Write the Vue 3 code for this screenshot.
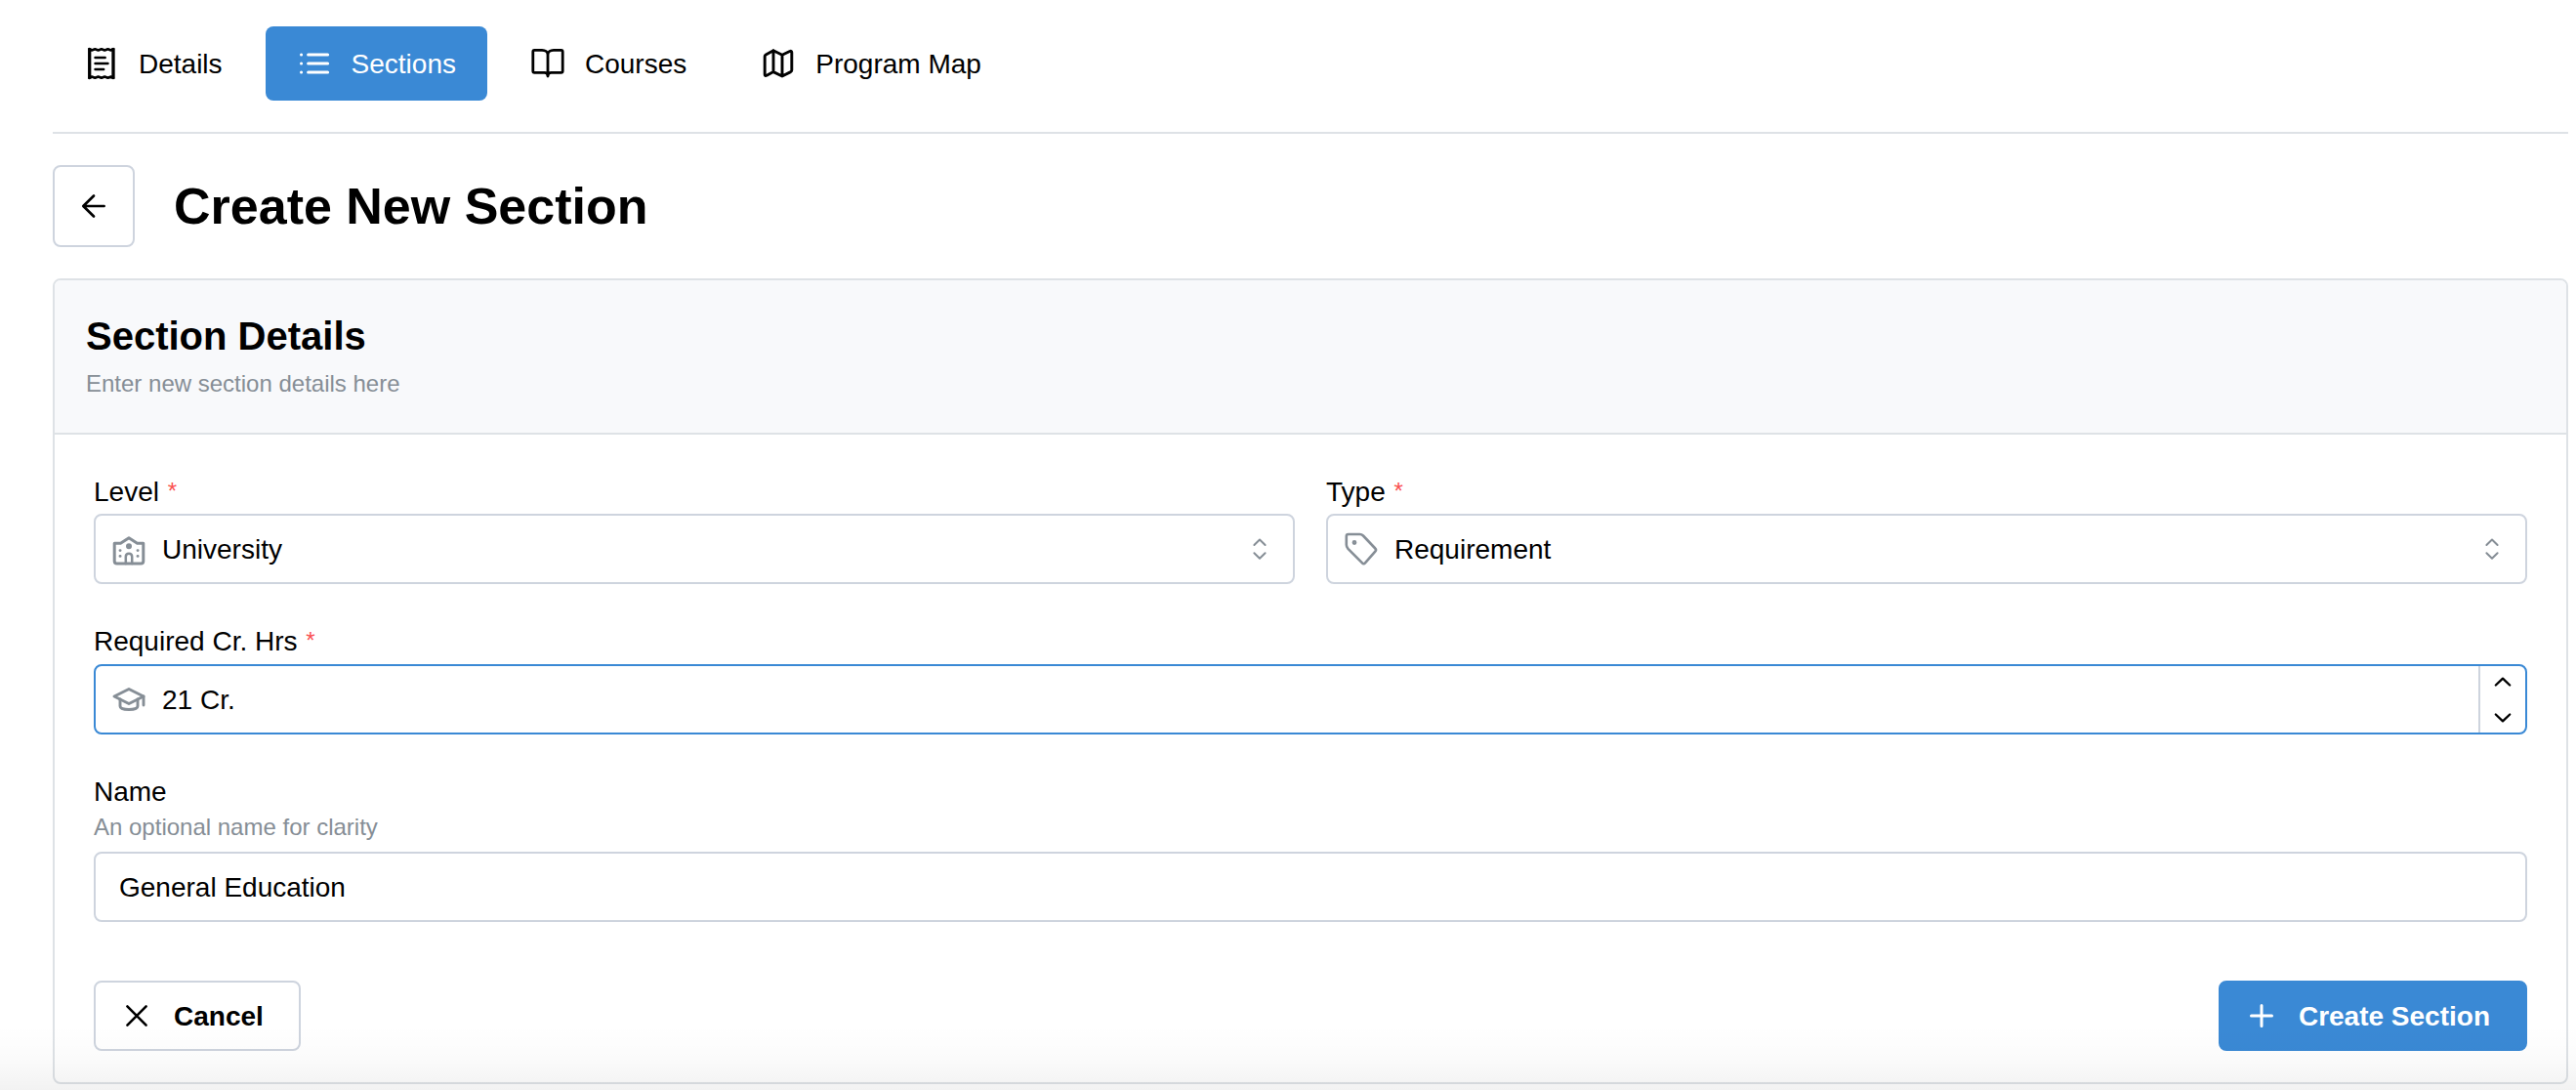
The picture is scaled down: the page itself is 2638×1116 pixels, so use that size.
<script setup>
import { ref } from 'vue';

const tabs = [
  { id: 'details', label: 'Details' },
  { id: 'sections', label: 'Sections' },
  { id: 'courses', label: 'Courses' },
  { id: 'map', label: 'Program Map' }
];

const activeTab = ref('sections');
const level = ref('University');
const type = ref('Requirement');
const hours = ref(21);
const name = ref('General Education');
</script>



<template>
  <div class="page">
    <nav class="tabs">
      <button v-for="tab in tabs" :key="tab.id" class="tab" :class="{ active: activeTab === tab.id }" @click="activeTab = tab.id">
        <svg v-if="tab.id === 'details'" class="icon" viewBox="0 0 36 36" stroke-width="2.4">
          <path d="M5.700 2.200V33.800M30 2.200V33.800" stroke-width="3.300" stroke-linecap="butt" />
          <path d="M5.500 3.200l2.400 1.300 3.400-1.300 3.300 1.300 3.300-1.300 3.300 1.300 3.300-1.300 3.200 1.300 2.300-1.300M5.500 32.800l2.400-1.300 3.400 1.300 3.300-1.300 3.300 1.300 3.300-1.300 3.300 1.300 3.200-1.300 2.300 1.300" stroke-width="2.600" />
          <path d="M11.500 12h10.200M11.500 18h13M11.500 24h8.700" />
        </svg>
        <svg v-else-if="tab.id === 'sections'" class="icon" viewBox="0 0 36 36" stroke-width="3">
          <path d="M11.600 9h20M11.600 18h20M11.600 27h20" />
          <path d="M4.500 9h.1M4.500 18h.1M4.500 27h.1" />
        </svg>
        <svg v-else-if="tab.id === 'courses'" class="icon" viewBox="0 0 36 36" stroke-width="2.800">
          <path d="M18 9C18 6.200 15.500 4.400 12 4.400H4.300Q2.800 4.400 2.800 5.900V25.800Q2.800 27.300 4.300 27.300H14.500Q18 27.300 18 31Q18 27.300 21.500 27.300H31.700Q33.200 27.300 33.200 25.800V5.900Q33.200 4.400 31.700 4.400H24C20.500 4.400 18 6.200 18 9V31" />
        </svg>
        <svg v-else class="icon" viewBox="0 0 36 36" stroke-width="2.900">
          <path d="M13 4.800L22 9.300 29.800 5.500Q31.800 4.800 31.800 6.700V24.700Q31.800 26 30.700 26.600L22 31 13 26.600 6.200 30.300Q4.200 31.200 4.200 29.300V10.800Q4.200 9.500 5.300 8.900ZM13 4.800V26.600M22 9.300V31" />
        </svg>
        <span>{{ tab.label }}</span>
      </button>
    </nav>

    <div class="heading">
      <button class="back">
        <svg class="icon" viewBox="0 0 36 36" stroke-width="2.700"><path d="M28.600 18H7.500M18 7.500L7.300 18 18 28.500" /></svg>
      </button>
      <h1>Create New Section</h1>
    </div>

    <section class="card">
      <header class="card-header">
        <h2>Section Details</h2>
        <p>Enter new section details here</p>
      </header>

      <form class="card-body" @submit.prevent>
        <div class="row">
          <div class="field">
            <label>Level <span class="asterisk">*</span></label>
            <div class="control">
              <svg class="icon field-icon" viewBox="0 0 40 40" stroke-width="3">
                <path d="M5.200 14.200h6.300L20 8.800l8.500 5.400h6.300V32.500Q34.800 35 32.300 35H7.700Q5.200 35 5.200 32.500Z" />
                <path d="M16.800 35V28Q16.800 24.700 20 24.700T23.200 28V35" stroke-width="2.500" />
                <circle cx="20" cy="17.300" r="1.500" />
                <path d="M11 21.600h.1M11 27.400h.1M29 21.600h.1M29 27.400h.1" stroke-width="2.900" />
              </svg>
              <span class="value">{{ level }}</span>
              <svg class="icon selector" viewBox="0 0 28 28" stroke-width="2">
                <path d="M8.400 10L14 4.500l5.600 5.500M8.400 18.200l5.600 5.500 5.600-5.500" />
              </svg>
            </div>
          </div>
          <div class="field">
            <label>Type <span class="asterisk">*</span></label>
            <div class="control">
              <svg class="icon field-icon" viewBox="0 0 40 40" stroke-width="2.600">
                <path d="M6.800 5H18.500Q20.500 5 22 6.500L34.300 19.500Q35.800 21 34.300 22.600L24 34.400Q22.500 36 21 34.400L6.500 19.800Q4.800 18 4.800 15.800V7Q4.800 5 6.800 5Z" />
                <circle cx="13" cy="13.500" r="1.100" />
              </svg>
              <span class="value">{{ type }}</span>
              <svg class="icon selector" viewBox="0 0 28 28" stroke-width="2">
                <path d="M8.400 10L14 4.500l5.600 5.500M8.400 18.200l5.600 5.500 5.600-5.500" />
              </svg>
            </div>
          </div>
        </div>

        <div class="field">
          <label class="raised">Required Cr. Hrs <span class="asterisk">*</span></label>
          <div class="control focused">
            <svg class="icon field-icon" viewBox="0 0 40 40" stroke-width="2.900">
              <path d="M20 9.500L35 17 20 24.500 5 17Z" />
              <path d="M11 20v7C11 31.700 29 31.700 29 27V20" />
              <path d="M35 17v9" />
            </svg>
            <span class="value">{{ hours }} Cr.</span>
            <div class="stepper">
              <button type="button" @click="hours++">
                <svg class="icon" viewBox="0 0 20 12" stroke-width="2.300"><path d="M2.800 9.500L10 2.600l7.200 6.900" /></svg>
              </button>
              <button type="button" @click="hours--">
                <svg class="icon" viewBox="0 0 20 12" stroke-width="2.300"><path d="M2.800 2.500L10 9.400l7.200-6.900" /></svg>
              </button>
            </div>
          </div>
        </div>

        <div class="field">
          <label class="name-label">Name</label>
          <p class="description">An optional name for clarity</p>
          <input v-model="name" class="control text-input" type="text" />
        </div>

        <div class="actions">
          <button type="button" class="btn">
            <svg class="icon" viewBox="0 0 36 36" stroke-width="2.600"><path d="M8.400 8.400l19.200 19.200M27.600 8.400L8.400 27.600" /></svg>
            <span>Cancel</span>
          </button>
          <button type="submit" class="btn primary">
            <svg class="icon" viewBox="0 0 36 36" stroke-width="3"><path d="M18 7.500v21M7.500 18h21" /></svg>
            <span>Create Section</span>
          </button>
        </div>
      </form>
    </section>
    <div class="bottom-shade"></div>
  </div>
</template>


<style>
body {
  background: #fff;
  overflow: hidden;
}
</style>

<style scoped>
.page {
  box-sizing: border-box;
  position: relative;
  height: 1116px;
  padding: 27px 8px 0 54px;
  overflow: hidden;
  background: #fff;
  color: #000;
  font-family: "Liberation Sans", Arial, sans-serif;
  font-size: 28px;
}

.page *,
.page *::before {
  box-sizing: border-box;
}

button {
  margin: 0;
  padding: 0;
  border: none;
  background: none;
  color: inherit;
  font: inherit;
}

h1,
h2,
p {
  margin: 0;
}

.icon {
  flex: none;
  width: 36px;
  height: 36px;
  fill: none;
  stroke: currentColor;
  stroke-linecap: round;
  stroke-linejoin: round;
}

.tabs {
  display: flex;
  gap: 12px;
  height: 110px;
  padding-bottom: 32px;
  border-bottom: 2px solid #dee2e6;
}

.tab {
  display: flex;
  align-items: center;
  gap: 20px;
  height: 76px;
  padding: 0 32px;
  border-radius: 8px;
}

.tab span,
.btn span {
  padding-top: 2px;
}

.tab.active {
  background: #3a89d5;
  color: #fff;
}

.heading {
  display: flex;
  align-items: center;
  gap: 40px;
  margin: 32px 0;
}

.back {
  display: flex;
  align-items: center;
  justify-content: center;
  width: 84px;
  height: 84px;
  border: 2px solid #ced4de;
  border-radius: 8px;
}

h1 {
  font-size: 52px;
  line-height: 68px;
}

.card {
  height: 825px;
  border: 2px solid #dee2e6;
  border-radius: 8px;
  overflow: hidden;
}

.card-header {
  height: 158px;
  padding: 30px 32px;
  background: #f8f9fb;
  border-bottom: 2px solid #dee2e6;
}

h2 {
  font-size: 40px;
  line-height: 54px;
}

.card-header p {
  margin-top: 3px;
  color: #868e96;
  font-size: 24px;
  line-height: 38px;
}

.card-body {
  display: flex;
  flex-direction: column;
  gap: 38px;
  padding: 37px 40px;
}

.row {
  display: grid;
  grid-template-columns: 1fr 1fr;
  gap: 32px;
}

label {
  display: block;
  height: 44px;
  line-height: 44px;
}

.raised {
  margin-top: -1px;
  margin-bottom: 1px;
}

.name-label {
  margin-top: -1px;
}

.asterisk {
  margin-left: 1px;
  color: #fa5252;
  font-size: 24px;
  line-height: 1;
  vertical-align: 2px;
}

.control {
  display: flex;
  align-items: center;
  width: 100%;
  height: 72px;
  border: 2px solid #ced4de;
  border-radius: 8px;
  background: #fff;
}

.control.focused {
  border-color: #3a89d5;
}

.field-icon {
  width: 40px;
  height: 40px;
  margin: 0 14px;
  color: #868e96;
}

.value {
  flex: 1;
  padding-top: 2px;
}

.selector {
  width: 28px;
  height: 28px;
  margin-right: 20px;
  color: #868e96;
}

.stepper {
  display: flex;
  flex-direction: column;
  width: 48px;
  height: 100%;
  border-left: 2px solid #ced4de;
}

.stepper button {
  display: flex;
  flex: 1;
  align-items: center;
  justify-content: center;
}

.stepper button:first-child {
  padding-bottom: 3px;
}

.stepper button:last-child {
  padding-top: 3px;
}

.stepper .icon {
  width: 20px;
  height: 12px;
}

.description {
  color: #868e96;
  font-size: 24px;
  line-height: 28px;
  margin-bottom: 11px;
}

.text-input {
  padding: 2px 24px 0;
  color: #000;
  font: inherit;
  outline: none;
}

.actions {
  display: flex;
  justify-content: space-between;
  margin-top: 22px;
}

.btn {
  display: flex;
  align-items: center;
  gap: 20px;
  height: 72px;
  padding: 0 36px 0 24px;
  border: 2px solid #ced4de;
  border-radius: 8px;
  background: #fff;
  font-weight: 700;
}

.btn.primary {
  background: #3a89d5;
  border-color: #3a89d5;
  color: #fff;
}

/* Soft fade along the lower edge of the view */
.bottom-shade {
  position: absolute;
  right: 0;
  bottom: 0;
  left: 0;
  height: 66px;
  background: linear-gradient(to bottom, rgba(0, 0, 0, 0), rgba(0, 0, 0, 0.015) 50%, rgba(0, 0, 0, 0.05));
  pointer-events: none;
}
</style>
